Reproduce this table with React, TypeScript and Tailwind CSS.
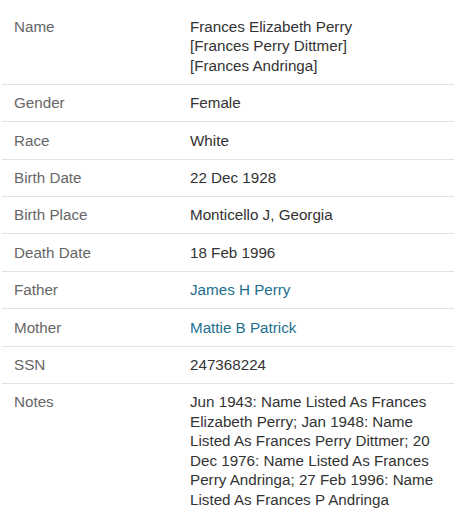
const rows: { label: string; value: string[]; link?: boolean }[] = [
  {
    label: "Name",
    value: [
      "Frances Elizabeth Perry",
      "[Frances Perry Dittmer]",
      "[Frances Andringa]",
    ],
  },
  { label: "Gender", value: ["Female"] },
  { label: "Race", value: ["White"] },
  { label: "Birth Date", value: ["22 Dec 1928"] },
  { label: "Birth Place", value: ["Monticello J, Georgia"] },
  { label: "Death Date", value: ["18 Feb 1996"] },
  { label: "Father", value: ["James H Perry"], link: true },
  { label: "Mother", value: ["Mattie B Patrick"], link: true },
  { label: "SSN", value: ["247368224"] },
  {
    label: "Notes",
    value: [
      "Jun 1943: Name Listed As Frances Elizabeth Perry; Jan 1948: Name Listed As Frances Perry Dittmer; 20 Dec 1976: Name Listed As Frances Perry Andringa; 27 Feb 1996: Name Listed As Frances P Andringa",
    ],
  },
];

export default function App() {
  return (
    <div
      className="min-h-screen bg-white px-[2px] pt-[8.5px] text-[15.2px] leading-[19.5px]"
      style={{ fontFamily: '"Liberation Sans", Arial, sans-serif' }}
    >
      {rows.map((row, i) => (
        <div
          key={row.label}
          className={`flex py-[8.45px] ${i < rows.length - 1 ? "border-b border-[#e2e2e2]" : ""}`}
        >
          <div className="w-[188px] shrink-0 pl-[12px] text-[#666666]">
            {row.label}
          </div>
          <div className="w-[252px] text-[#333333]">
            {row.value.map((line) => (
              <div key={line}>
                {row.link ? (
                  <a href="#" className="text-[#1d6f8f]">
                    {line}
                  </a>
                ) : (
                  line
                )}
              </div>
            ))}
          </div>
        </div>
      ))}
    </div>
  );
}
